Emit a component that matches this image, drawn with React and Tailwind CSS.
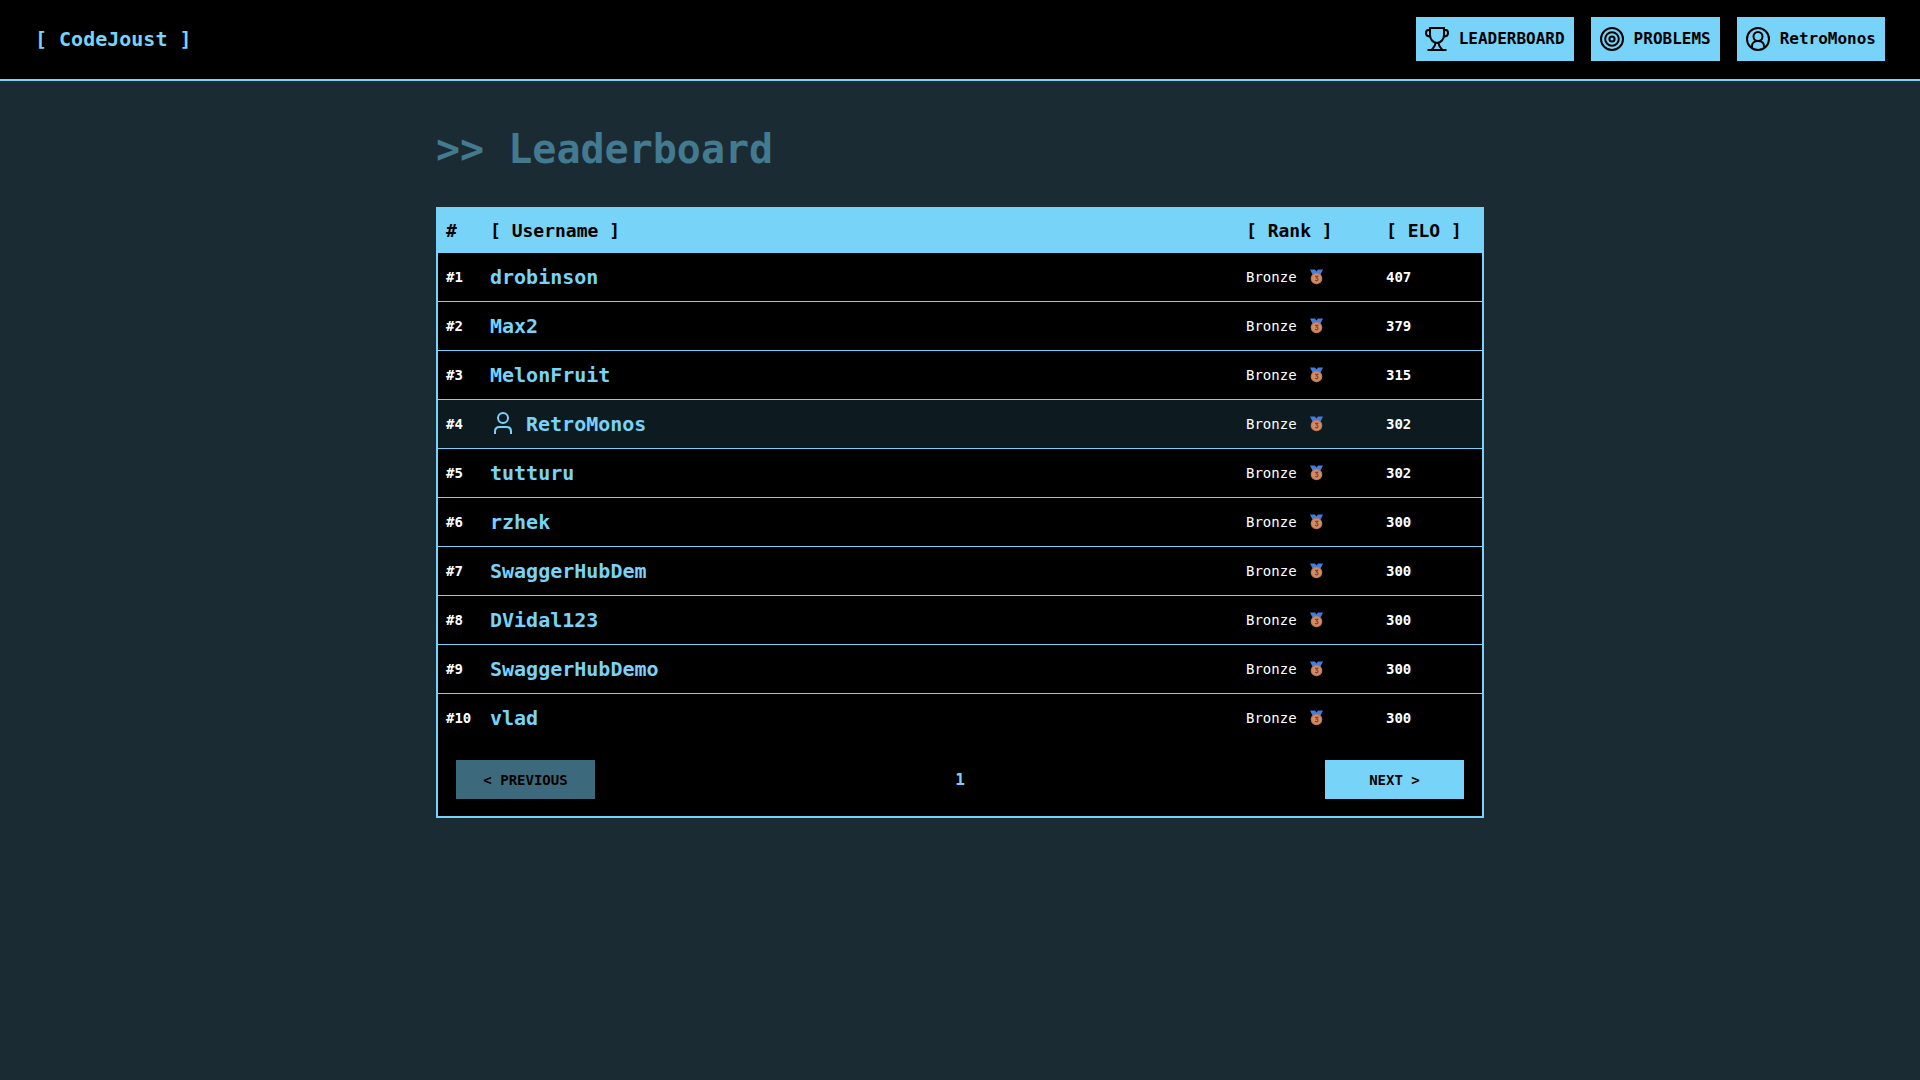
import { useState } from "react";

const players = [
  { name: "drobinson", elo: 407 },
  { name: "Max2", elo: 379 },
  { name: "MelonFruit", elo: 315 },
  { name: "RetroMonos", elo: 302 },
  { name: "tutturu", elo: 302 },
  { name: "rzhek", elo: 300 },
  { name: "SwaggerHubDem", elo: 300 },
  { name: "DVidal123", elo: 300 },
  { name: "SwaggerHubDemo", elo: 300 },
  { name: "vlad", elo: 300 },
];

const currentUser = "RetroMonos";

function TrophyIcon() {
  return (
    <svg className="size-7" viewBox="0 0 28 28" fill="none" stroke="currentColor" strokeWidth="2" aria-hidden="true">
      <path d="M7 3H21V10C21 14 18 18 14 18C10 18 7 14 7 10Z" />
      <path d="M7 5H5.5C3.8 5 3 6 3 8C3 10.300 4.500 11.500 7.500 11.500M21 5H22.500C24.200 5 25 6 25 8C25 10.300 23.500 11.500 20.500 11.500" />
      <path d="M12.500 18C12.500 21 10.500 22.500 8.500 25M15.500 18C15.500 21 17.500 22.500 19.500 25M4.500 25H23.500" />
    </svg>
  );
}

function TargetIcon() {
  return (
    <svg className="size-7" viewBox="0 0 28 28" fill="none" stroke="currentColor" strokeWidth="2" aria-hidden="true">
      <circle cx="14" cy="14" r="11" />
      <circle cx="14" cy="14" r="6.800" />
      <circle cx="14" cy="14" r="2.600" />
    </svg>
  );
}

function ProfileIcon() {
  return (
    <svg className="size-7" viewBox="0 0 28 28" fill="none" stroke="currentColor" strokeWidth="2" aria-hidden="true">
      <circle cx="14" cy="14" r="11" />
      <circle cx="14" cy="11.500" r="4.500" />
      <path d="M8 22.500V21C8 18 10.500 16 14 16C17.500 16 20 18 20 21V22.500" />
    </svg>
  );
}

function UserIcon() {
  return (
    <svg className="size-7" viewBox="0 0 28 28" fill="none" stroke="currentColor" strokeWidth="2" aria-hidden="true">
      <circle cx="13" cy="8" r="5" />
      <path d="M5 24V21.500C5 18.500 7 17 9.500 17H16.500C19 17 21 18.500 21 21.500V24" />
    </svg>
  );
}

function BronzeMedal() {
  return (
    <svg className="size-4" viewBox="0 0 16 16" aria-hidden="true">
      <path d="M1 0.500H6L7.500 2.500L9 0.500H14L11.500 5.500H3.500Z" fill="#3f7de8" />
      <circle cx="7.500" cy="9.500" r="5.800" fill="#c27a55" />
      <circle cx="7.500" cy="9.500" r="4.600" fill="#d58c62" />
      <path d="M6 7.300H8.800L7.500 9C9.500 9 9.500 11.800 7.500 11.800C6.800 11.800 6.300 11.500 6 11.200" fill="none" stroke="#7a4436" strokeWidth="1.200" />
    </svg>
  );
}

const navLink = "flex items-center gap-2 h-11 pl-[7px] pr-[9px] bg-[#77d3f8] text-black font-bold";

export default function App() {
  const [page, setPage] = useState(1);

  return (
    <div className="min-h-screen bg-[#1b2b33] font-['DejaVu_Sans_Mono',monospace] text-white">
      <header className="flex items-center justify-between bg-black border-b-2 border-[#77d3f8] px-[35px] pt-[17px] pb-[18px]">
        <a href="#" className="text-xl font-bold text-[#77d3f8]">[ CodeJoust ]</a>
        <nav className="flex gap-[17px]">
          <a href="#leaderboard" className={navLink}><TrophyIcon /> LEADERBOARD</a>
          <a href="#problems" className={navLink}><TargetIcon /> PROBLEMS</a>
          <a href="#profile" className={navLink}><ProfileIcon /> {currentUser}</a>
        </nav>
      </header>

      <main className="max-w-[1048px] mx-auto pt-11">
        <h1 className="text-[40px] leading-12 font-bold text-[#437a90] mb-[34px]">&gt;&gt; Leaderboard</h1>

        <div className="bg-black border-2 border-[#77d3f8]">
          <table className="w-full table-fixed border-separate border-spacing-0 text-left">
            <thead className="bg-[#77d3f8] text-black text-lg">
              <tr className="h-11">
                <th className="w-11 px-2">#</th>
                <th className="px-2">[ Username ]</th>
                <th className="w-[140px] px-2">[ Rank ]</th>
                <th className="w-[104px] px-2">[ ELO ]</th>
              </tr>
            </thead>
            <tbody className="text-sm">
              {players.map((player, i) => (
                <tr
                  key={player.name}
                  className={`h-[49px] last:h-12 *:border-b *:border-[#77d3f8] last:*:border-b-0 ${player.name === currentUser ? "bg-[#0d1a1f]" : ""}`}
                >
                  <td className="pl-2 font-bold">#{i + 1}</td>
                  <td className="px-2">
                    <a href="#player" className="flex items-center gap-2 text-xl font-bold text-[#77d3f8]">
                      {player.name === currentUser && <UserIcon />}
                      {player.name}
                    </a>
                  </td>
                  <td className="px-2">
                    <span className="flex items-center gap-3">Bronze <BronzeMedal /></span>
                  </td>
                  <td className="px-2 font-bold">{player.elo}</td>
                </tr>
              ))}
            </tbody>
          </table>

          {/* Pagination */}
          <div className="flex items-center justify-between px-[18px] pt-[18px] pb-[17px]">
            <button
              onClick={() => setPage(page - 1)}
              disabled={page === 1}
              className="w-[139px] h-[39px] bg-[#77d3f8] disabled:bg-[#3c6a7c] text-black text-sm font-bold"
            >
              &lt; PREVIOUS
            </button>
            <span className="font-bold text-[#77d3f8]">{page}</span>
            <button
              onClick={() => setPage(page + 1)}
              className="w-[139px] h-[39px] bg-[#77d3f8] text-black text-sm font-bold"
            >
              NEXT &gt;
            </button>
          </div>
        </div>
      </main>
    </div>
  );
}
